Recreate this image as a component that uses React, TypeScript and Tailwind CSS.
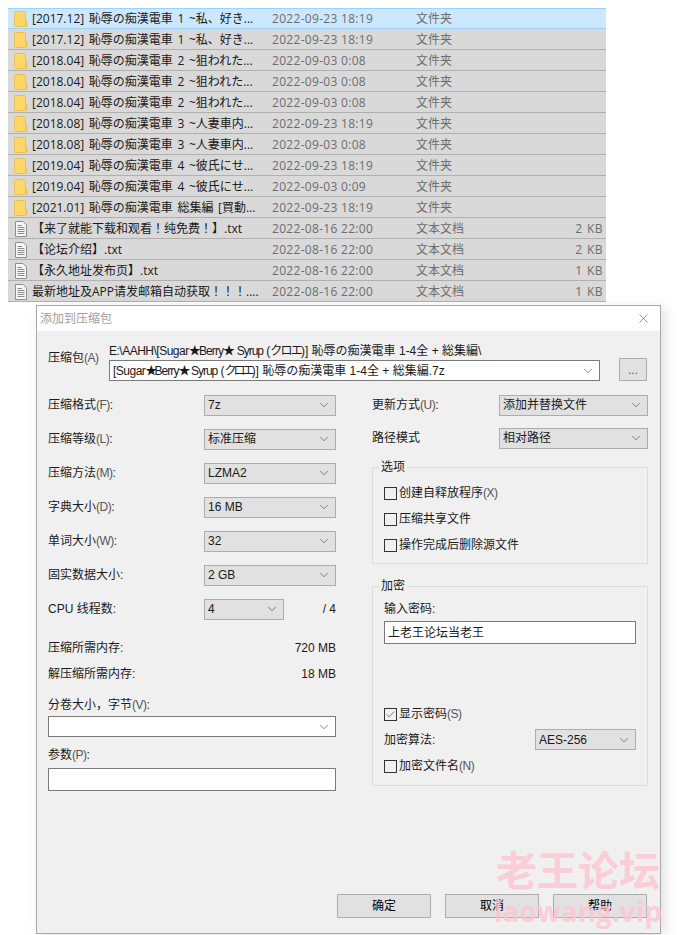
import { ChevronDown, X, Check } from "lucide-react"

const uiFont = "font-['Liberation_Sans','Noto_Sans_CJK_SC',sans-serif]"
const listFont = "font-['Open_Sans','Noto_Sans_CJK_JP',sans-serif]"
const pathFont = "font-['Liberation_Sans','Noto_Sans_CJK_JP',sans-serif]"

const rows = [
  { name: "[2017.12] 恥辱の痴漢電車 1 ~私、好き...", date: "2022-09-23 18:19", type: "文件夹", size: "", folder: true },
  { name: "[2017.12] 恥辱の痴漢電車 1 ~私、好き...", date: "2022-09-23 18:19", type: "文件夹", size: "", folder: true },
  { name: "[2018.04] 恥辱の痴漢電車 2 ~狙われた...", date: "2022-09-03 0:08", type: "文件夹", size: "", folder: true },
  { name: "[2018.04] 恥辱の痴漢電車 2 ~狙われた...", date: "2022-09-03 0:08", type: "文件夹", size: "", folder: true },
  { name: "[2018.04] 恥辱の痴漢電車 2 ~狙われた...", date: "2022-09-03 0:08", type: "文件夹", size: "", folder: true },
  { name: "[2018.08] 恥辱の痴漢電車 3 ~人妻車内...", date: "2022-09-23 18:19", type: "文件夹", size: "", folder: true },
  { name: "[2018.08] 恥辱の痴漢電車 3 ~人妻車内...", date: "2022-09-03 0:08", type: "文件夹", size: "", folder: true },
  { name: "[2019.04] 恥辱の痴漢電車 4 ~彼氏にせ...", date: "2022-09-23 18:19", type: "文件夹", size: "", folder: true },
  { name: "[2019.04] 恥辱の痴漢電車 4 ~彼氏にせ...", date: "2022-09-03 0:09", type: "文件夹", size: "", folder: true },
  { name: "[2021.01] 恥辱の痴漢電車 総集編 [買動...", date: "2022-09-23 18:19", type: "文件夹", size: "", folder: true },
  { name: "【来了就能下载和观看！纯免费！】.txt", date: "2022-08-16 22:00", type: "文本文档", size: "2 KB", folder: false },
  { name: "【论坛介绍】.txt", date: "2022-08-16 22:00", type: "文本文档", size: "2 KB", folder: false },
  { name: "【永久地址发布页】.txt", date: "2022-08-16 22:00", type: "文本文档", size: "1 KB", folder: false },
  { name: "最新地址及APP请发邮箱自动获取！！！....", date: "2022-08-16 22:00", type: "文本文档", size: "1 KB", folder: false },
]

function FolderIcon() {
  return (
    <svg width="14" height="16" viewBox="0 0 14 16" className="shrink-0">
      <path d="M0.5 1.5 Q0.5 0.5 1.5 0.5 H10.5 Q11.5 0.5 11.5 1.5 V15.5 H1.5 Q0.5 15.5 0.5 14.5 Z" fill="#ffd768" stroke="#e8bf58" />
      <path d="M11.5 9 L13.5 9 V15.5 H11.5 Z" fill="#f0c55c" />
    </svg>
  )
}

function TextFileIcon() {
  return (
    <svg width="12" height="16" viewBox="0 0 12 16" className="shrink-0">
      <path d="M0.5 0.5 H8 L11.5 4 V15.5 H0.5 Z" fill="#f7f7f7" stroke="#8d8d8d" />
      <path d="M2.5 4.5 H7 M2.5 6.5 H9.5 M2.5 8.5 H9.5 M2.5 10.5 H9.5 M2.5 12.5 H9.5" stroke="#8a8a8a" />
    </svg>
  )
}

function FileRow({ row, selected }: { row: (typeof rows)[number]; selected: boolean }) {
  return (
    <div
      className={
        "flex items-center h-[21px] text-xs border-y " +
        (selected ? "bg-[#cce8ff] border-[#99d1ff]" : "bg-[#d9d9d9] border-t-[#d9d9d9] border-b-[#b0b0b0]")
      }
    >
      <div className="w-[24px] shrink-0 flex justify-center pl-[1px]">
        {row.folder ? <FolderIcon /> : <TextFileIcon />}
      </div>
      <div className="w-[240px] shrink-0 truncate text-[#1a1a1a] [word-spacing:1.5px]">{row.name}</div>
      <div className="w-[144px] shrink-0 text-[#6d6d6d] tracking-[0.3px]">{row.date}</div>
      <div className="w-[100px] shrink-0 text-[#6d6d6d]">{row.type}</div>
      <div className="flex-1 text-right pr-[3px] text-[#6d6d6d] tracking-[0.4px] [word-spacing:1px]">{row.size}</div>
    </div>
  )
}

// 7-Zip's mnemonic hints like (F) render narrow and a bit lighter
function Label({ text }: { text: string }) {
  return (
    <>
      {text.split(/(\([A-Z]\))/).map((part, i) =>
        /^\([A-Z]\)$/.test(part) ? (
          <span key={i} className="text-[#555] tracking-[-0.5px]">
            {part}
          </span>
        ) : (
          <span key={i}>{part}</span>
        )
      )}
    </>
  )
}

// Archive name with the squeezed latin runs of the original
function ArchiveName({ squeeze }: { squeeze: string }) {
  return (
    <>
      <span className="tracking-[-0.5px]">[Sugar</span>
      <span className={squeeze}>★</span>
      <span className="tracking-[-0.9px]">Berry</span>
      <span className={squeeze}>★</span> <span className="tracking-[-1px]">Syrup</span> (
      <span className={squeeze}>クロエ</span>)] 恥辱の痴漢電車 1-4全 + 総集編
    </>
  )
}

function Select({ value, className, light }: { value: string; className: string; light?: boolean }) {
  return (
    <div
      className={
        "flex items-center h-[21px] pl-[3px] pr-[4px] border shrink-0 " +
        (light ? "bg-white border-[#7a7a7a] " : "bg-[#e1e1e1] border-[#adadad] ") +
        className
      }
    >
      <span className="flex-1 truncate">{value}</span>
      <ChevronDown size={14} strokeWidth={1} className="text-[#333]" />
    </div>
  )
}

function Field({ label, value, width = "w-[132px]" }: { label: string; value: string; width?: string }) {
  return (
    <div className="flex items-center h-[34px]">
      <span className="w-[156px] shrink-0">
        <Label text={label} />
      </span>
      <Select value={value} className={width} />
    </div>
  )
}

function Option({ label, checked, className = "" }: { label: string; checked?: boolean; className?: string }) {
  return (
    <div className={"flex items-center gap-[2px] " + className}>
      <span className="w-[13px] h-[13px] bg-[#f0f0f0] border border-[#333] flex items-center justify-center shrink-0">
        {checked && <Check size={11} strokeWidth={1.5} className="text-[#444]" />}
      </span>
      <span>
        <Label text={label} />
      </span>
    </div>
  )
}

function Group({ title, className, children }: { title: string; className: string; children: React.ReactNode }) {
  return (
    <div className={"relative border border-[#dcdcdc] " + className}>
      <span className="absolute left-[6px] top-[-10px] bg-[#f0f0f0] px-[2px] leading-[18px]">{title}</span>
      {children}
    </div>
  )
}

function Button({ label }: { label: string }) {
  return (
    <div className="w-[94px] h-[24px] bg-[#e1e1e1] border border-[#adadad] flex items-center justify-center text-black">
      {label}
    </div>
  )
}

export default function App() {
  return (
    <div className="relative w-[682px] h-[935px] bg-white overflow-hidden pt-[8px]">
      <div className={"ml-[8px] w-[598px] " + listFont}>
        {rows.map((row, i) => (
          <FileRow key={i} row={row} selected={i === 0} />
        ))}
      </div>

      {/* 7-Zip dialog */}
      <div
        className={
          "relative ml-[36px] mt-[3px] w-[625px] h-[629px] bg-[#f0f0f0] border border-[#a9a9a9] shadow-[4px_3px_12px_rgba(0,0,0,0.12)] text-xs text-[#1a1a1a] flex flex-col " +
          uiFont
        }
      >
        <div className="h-[25px] bg-white flex items-center justify-between pl-[3px] pr-[9px] text-[#a0a0a0] shrink-0">
          <span>添加到压缩包</span>
          <X size={15} strokeWidth={1} className="text-[#555]" />
        </div>

        <div className="flex pl-[11px] pt-[12px] h-[54px] shrink-0">
          <span className="w-[61px] pt-[7px] shrink-0">
            <Label text="压缩包(A)" />
          </span>
          <div className="w-[491px] shrink-0">
            <div className={"h-[17px] leading-[17px] whitespace-nowrap " + pathFont}>
              <span className="tracking-[-0.5px]">E:\AAHH\</span>
              <ArchiveName squeeze="tracking-[-1.8px]" />\
            </div>
            <div className={"h-[21px] bg-white border border-[#7a7a7a] flex items-center pl-[3px] pr-[4px] " + pathFont}>
              <span className="flex-1 truncate">
                <ArchiveName squeeze="tracking-[-3px]" />
                .7z
              </span>
              <ChevronDown size={14} strokeWidth={1} className="text-[#333]" />
            </div>
          </div>
          <div className="ml-[19px] mt-[15px] w-[28px] h-[23px] bg-[#e1e1e1] border border-[#adadad] flex items-center justify-center text-[#555]">
            ...
          </div>
        </div>

        <div className="flex pl-[11px] flex-1 min-h-0">
          <div className="w-[288px] shrink-0 pt-[3px]">
            <Field label="压缩格式(F):" value="7z" />
            <Field label="压缩等级(L):" value="标准压缩" />
            <Field label="压缩方法(M):" value="LZMA2" />
            <Field label="字典大小(D):" value="16 MB" />
            <Field label="单词大小(W):" value="32" />
            <Field label="固实数据大小:" value="2 GB" />
            <div className="flex items-center h-[34px]">
              <span className="w-[156px] shrink-0">CPU 线程数:</span>
              <Select value="4" className="w-[80px]" />
              <span className="flex-1 text-right">/ 4</span>
            </div>
            <div className="flex items-center justify-between h-[26px] mt-[9px]">
              <span>压缩所需内存:</span>
              <span>720 MB</span>
            </div>
            <div className="flex items-center justify-between h-[26px]">
              <span>解压缩所需内存:</span>
              <span>18 MB</span>
            </div>
            <div className="h-[18px] leading-[18px] mt-[9px]">
              <Label text="分卷大小，字节(V):" />
            </div>
            <Select value="" light className="w-full mt-[2px]" />
            <div className="h-[18px] leading-[18px] mt-[9px]">
              <Label text="参数(P):" />
            </div>
            <div className="h-[23px] bg-white border border-[#7a7a7a] mt-[4px]" />
          </div>

          <div className="w-[276px] ml-[36px] shrink-0 pt-[3px]">
            <div className="flex items-center h-[34px]">
              <span className="w-[127px] shrink-0">
                <Label text="更新方式(U):" />
              </span>
              <Select value="添加并替换文件" className="w-[149px]" />
            </div>
            <div className="flex items-center h-[32px]">
              <span className="w-[127px] shrink-0">路径模式</span>
              <Select value="相对路径" className="w-[149px]" />
            </div>

            <Group title="选项" className="h-[97px] mt-[13px] pl-[11px] pt-[15px]">
              <Option label="创建自释放程序(X)" className="h-[20px]" />
              <Option label="压缩共享文件" className="h-[20px] mt-[6px]" />
              <Option label="操作完成后删除源文件" className="h-[20px] mt-[6px]" />
            </Group>

            <Group title="加密" className="h-[200px] mt-[22px] pl-[11px] pt-[13px]">
              <div className="h-[18px] leading-[18px]">输入密码:</div>
              <div className="w-[252px] h-[23px] bg-white border border-[#7a7a7a] flex items-center pl-[3px] mt-[3px]">
                上老王论坛当老王
              </div>
              <Option label="显示密码(S)" checked className="h-[20px] mt-[60px]" />
              <div className="flex items-center h-[21px] mt-[5px]">
                <span className="w-[151px] shrink-0">加密算法:</span>
                <Select value="AES-256" className="w-[101px]" />
              </div>
              <Option label="加密文件名(N)" className="h-[20px] mt-[6px]" />
            </Group>
          </div>
        </div>

        <div className="flex justify-end gap-[14px] pr-[13px] pb-[15px] shrink-0">
          <Button label="确定" />
          <Button label="取消" />
          <Button label="帮助" />
        </div>

        {/* watermark */}
        <div className="absolute right-[-4px] bottom-[8px] w-[172px] text-center text-[#ffc4d0]/80 font-bold pointer-events-none">
          <div className="text-[41px] leading-[44px] font-['Noto_Sans_CJK_SC',sans-serif]">老王论坛</div>
          <div className="text-[28px] leading-[28px] mt-[7px] font-['Open_Sans',sans-serif]">laowang.vip</div>
        </div>
      </div>
    </div>
  )
}
